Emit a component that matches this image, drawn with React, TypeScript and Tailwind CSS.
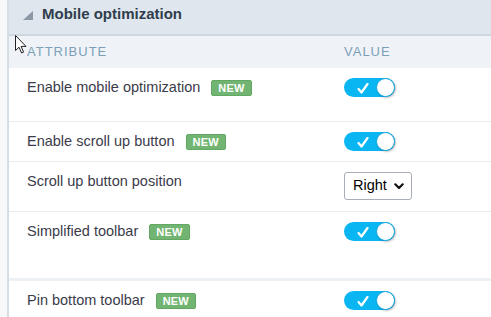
import { useState } from "react";

type Row = {
  label: string;
  isNew?: boolean;
  kind: "toggle" | "select";
  height: string;
  border: string;
};

const rows: Row[] = [
  { label: "Enable mobile optimization", isNew: true, kind: "toggle", height: "h-[54px]", border: "border-b border-[#e8ecf0]" },
  { label: "Enable scroll up button", isNew: true, kind: "toggle", height: "h-[40px]", border: "border-b border-[#e8ecf0]" },
  { label: "Scroll up button position", kind: "select", height: "h-[50px]", border: "border-b border-[#e8ecf0]" },
  { label: "Simplified toolbar", isNew: true, kind: "toggle", height: "h-[69px]", border: "border-b-[3px] border-[#edf0f4]" },
  { label: "Pin bottom toolbar", isNew: true, kind: "toggle", height: "h-[40px]", border: "" },
];

export default function App() {
  return (
    <div
      className="relative w-[491px] h-[317px] overflow-hidden bg-white flex"
      style={{ fontFamily: '"Liberation Sans", Arial, sans-serif' }}
    >
      <div className="w-[7px] shrink-0 bg-[#f7f8fa]" />
      <div className="flex-1 border-l-2 border-[#d5dde5] flex flex-col">
        {/* Section header */}
        <div className="h-[36px] shrink-0 bg-[#dfe6ee] border-b-2 border-[#cfd8e1] flex items-center pl-[14px] gap-[9px]">
          <svg width="10" height="9" viewBox="0 0 10 9" className="mb-[3px]">
            <polygon points="10,0 10,9 0,9" fill="#8b97a4" />
          </svg>
          <span className="text-[15px] font-bold text-[#2f3d4c] mb-[5px]">Mobile optimization</span>
        </div>

        {/* Column header */}
        <div className="h-[32px] shrink-0 bg-[#eff3f7] flex items-center text-[13px] tracking-[1px] text-[#7c9fb7]">
          <div className="w-[335px] pl-[18px]">ATTRIBUTE</div>
          <div>VALUE</div>
        </div>

        {rows.map((r) => (
          <SettingRow key={r.label} row={r} />
        ))}
      </div>

      {/* mouse cursor */}
      <svg width="12" height="19" viewBox="0 0 12 19" className="absolute left-[15px] top-[35px]">
        <path d="M0.5 0.5 L0.5 15.5 L4 12.2 L6.6 18 L8.6 17.1 L6.1 11.4 L11 11.4 Z" fill="#fff" stroke="#222" strokeWidth="1" strokeLinejoin="round" />
      </svg>
    </div>
  );
}

function SettingRow({ row }: { row: Row }) {
  return (
    <div className={`${row.height} ${row.border} shrink-0 flex items-start`}>
      <div className="w-[335px] pl-[18px] pt-[9px] flex items-center text-[14.5px] text-[#3b3b4a]">
        <span>{row.label}</span>
        {row.isNew && (
          <span className="ml-[11px] h-[16px] px-[6px] rounded-[2px] bg-[#72b572] border border-[#62a862] text-white text-[11px] font-bold leading-[14px] tracking-[0.2px]">
            NEW
          </span>
        )}
      </div>
      <div className="pt-[10px]">
        {row.kind === "toggle" ? <Toggle /> : <PositionSelect />}
      </div>
    </div>
  );
}

function Toggle() {
  const [on, setOn] = useState(true);
  return (
    <button
      onClick={() => setOn(!on)}
      className={`relative w-[51px] h-[19px] rounded-full ${on ? "bg-[#09b6f2]" : "bg-[#c9d1d9]"} flex items-center`}
    >
      <svg width="12" height="11" viewBox="0 0 12 11" className="absolute left-[13px] top-[5px]">
        <path d="M1.5 6 L4.5 9.5 L10.5 1" fill="none" stroke="#fff" strokeWidth="2.2" strokeLinecap="round" strokeLinejoin="round" />
      </svg>
      <span className="absolute right-[0px] top-[0px] w-[19px] h-[19px] rounded-full bg-white border border-[#1aa8de] shadow-[1px_1px_2px_rgba(0,0,0,0.25)]" />
    </button>
  );
}

function PositionSelect() {
  return (
    <div className="w-[68px] h-[28px] border border-[#a8aeb5] rounded-[3px] bg-white flex items-center justify-between pl-[8px] pr-[7px] text-[14.5px] text-black">
      <span>Right</span>
      <svg width="10" height="7" viewBox="0 0 10 7">
        <path d="M1.3 1.3 L5 5 L8.7 1.3" fill="none" stroke="#111" strokeWidth="2.2" strokeLinecap="round" strokeLinejoin="round" />
      </svg>
    </div>
  );
}
